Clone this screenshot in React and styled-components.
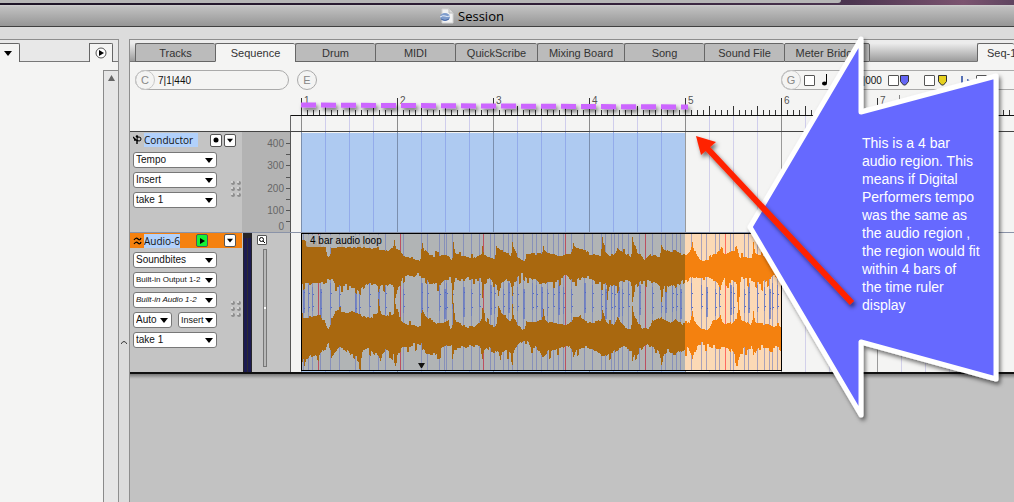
import React, { useId } from "react";
import styled, { createGlobalStyle, css } from "styled-components";

const sans = `"Liberation Sans", Arial, Helvetica, sans-serif`;
const humanist = `"Open Sans", "Noto Sans", sans-serif`;

const GlobalStyle = createGlobalStyle`
  *, *::before, *::after { box-sizing: border-box; }
  body { margin: 0; background: #dcdcdc; font-family: ${sans}; font-size: 11px; color: #222; }
  button, select, input { font-family: inherit; margin: 0; padding: 0; }
  svg { display: block; }
`;

/* ---------- window frame ---------- */

const Screen = styled.div`
  position: relative;
  display: flex;
  flex-direction: column;
  min-height: 100vh;
  overflow: hidden;
`;

const Desktop = styled.div`
  height: 5px;
  background: linear-gradient(90deg, #1d1426 0%, #33203a 60%, #4c3550 84%, #7c5470 95%, #5f4560 100%);
`;

const BackWindow = styled.div`
  height: 3px;
  margin-right: 173px;
  background: #b6b6b6;
  border-bottom-right-radius: 3px;
`;

const TitleBar = styled.header`
  display: flex;
  align-items: center;
  justify-content: center;
  gap: 4px;
  height: 22px;
  padding-right: 70px;
  background: linear-gradient(#d0d0d0, #c0c0c0 10%, #969696);
  border-bottom: 1px solid #404040;
`;

const Title = styled.h1`
  margin: 0;
  font: 400 13px/20px ${humanist};
  color: #000;
`;

const Workspace = styled.main`
  display: flex;
  flex: 1;
  gap: 10px;
  padding-top: 12px;
`;

/* ---------- left list panel ---------- */

const SidePanel = styled.aside`
  display: flex;
  flex-direction: column;
  flex: none;
  width: 119px;
  border: solid #8e8e8e;
  border-width: 1px 1px 0 0;
  background: #f4f4f3;
`;

const SideTabs = styled.div`
  display: flex;
  align-items: flex-end;
  height: 22px;
  background: #e8e8e8;
`;

const SideTab = styled.button`
  display: flex;
  align-items: center;
  justify-content: center;
  height: 19px;
  width: ${(p) => p.$width}px;
  border: solid #666;
  border-width: 1px 1px 0 ${(p) => (p.$flush ? 0 : 1)}px;
  border-radius: 0 2px 0 0;
  background: #f4f4f3;
  ${(p) => p.$flush && css`padding-right: 4px;`}
`;

const TabLine = styled.div`
  flex: ${(p) => (p.$grow ? 1 : "none")};
  width: 5px;
  border-bottom: 1px solid #777;
`;

const SideBody = styled.div`
  display: flex;
  flex: 1;
  justify-content: flex-end;
  padding-top: 8px;
`;

const ScrollTrack = styled.div`
  width: 15px;
  padding: 4px 0 0 4px;
  border: solid #8a8a8a;
  border-width: 1px 0 0 1px;
  background: #e6e6e6;
`;

const Divider = styled.div`
  position: absolute;
  left: 121px;
  top: 340px;
`;

/* ---------- sequence panel ---------- */

const MainPanel = styled.section`
  display: flex;
  flex-direction: column;
  flex: 1;
  min-width: 0;
  border: solid #8e8e8e;
  border-width: 1px 0 0 1px;
  background: #c2c2c2;
`;

const TabStrip = styled.nav`
  display: flex;
  height: 22px;
  padding-top: 3px;
  overflow: hidden;
  background: #ececec;
`;

const StripFill = styled.div`
  flex: ${(p) => (p.$lead ? "none" : 1)};
  width: 5px;
  border-bottom: 1px solid #777;
  background: linear-gradient(#ededed, #9c9c9c);
`;

const Tab = styled.button`
  flex: none;
  width: ${(p) => p.$width}px;
  height: 19px;
  border: 1px solid #666;
  border-right-width: 0;
  border-radius: 2px 2px 0 0;
  background: #bbb;
  color: #333;
  font-size: 11px;
  line-height: 18px;
  white-space: nowrap;
  ${(p) => p.$active && css`background: #f4f4f3; border-bottom-color: #f4f4f3;`}
  ${(p) => p.$last && css`border-right-width: 1px;`}
  ${(p) => p.$cut && css`text-align: left; padding-left: 9px;`}
`;

const Toolbar = styled.div`
  display: flex;
  gap: 8px;
  height: 33px;
  padding: 8px 0 5px 5px;
  background: #f4f4f3;
`;

const Pill = styled.div`
  display: flex;
  align-items: center;
  height: 20px;
  width: ${(p) => p.$width}px;
  border: 1px solid #aaa;
  border-radius: 10px;
  color: #111;
  font-size: 10px;
  ${(p) => p.$open && css`
    margin-left: auto;
    border-right-width: 0;
    border-radius: 10px 0 0 10px;
  `}
`;

const Knob = styled.button`
  flex: none;
  width: 20px;
  height: 20px;
  border: 1px solid ${(p) => (p.$alone ? "#aaa" : "#c8c8c8")};
  border-radius: 50%;
  margin: ${(p) => (p.$alone ? 0 : "0 3px 0 -1px")};
  background: none;
  color: #888;
  font-size: 11px;
`;

const Counter = styled.input`
  width: 100px;
  border: 0;
  background: none;
  color: #111;
  font-size: 10px;
`;

const Tick = styled.input`
  appearance: none;
  flex: none;
  width: 11px;
  height: 11px;
  border: 1px solid #555;
  border-radius: 1px;
  background: #fff;
`;

const GridReadout = styled.span`
  display: flex;
  align-items: center;
  gap: 29px;
  margin-left: 7px;
  width: 66px;
`;

const Marker = styled.span`
  width: ${(p) => p.$width}px;
  padding-left: ${(p) => p.$lead || 0}px;
`;

const RulerRow = styled.div`
  display: flex;
  height: 36px;
  background: #f4f4f3;
`;

const RulerLabel = styled.div`
  flex: none;
  width: 160px;
`;

const Track = styled.section`
  display: grid;
  grid-template-columns: 112px 49px 1fr;
  height: ${(p) => p.$height}px;
  border-top: 1px solid ${(p) => p.$line};
  background: #c4c4c4;
`;

const TrackInfo = styled.div`
  display: flex;
  flex-direction: column;
  min-width: 0;
`;

const TrackHeader = styled.div`
  display: flex;
  align-items: center;
  gap: 2px;
  height: ${(p) => (p.$armed ? 15 : 16)}px;
  padding: 0 6px 0 3px;
  background: ${(p) => (p.$armed ? "#f5810f" : "none")};
`;

const TrackName = styled.span`
  height: 14px;
  padding-right: ${(p) => (p.$tight ? 0 : 5)}px;
  background: #b2d1fb;
  color: #111;
  font: 400 10px/14px ${humanist};
`;

const SmallButton = styled.button`
  display: flex;
  align-items: center;
  justify-content: center;
  width: 12px;
  height: 13px;
  border: 1px solid #555;
  border-radius: 2px;
  background: ${(p) => (p.$on ? "#12f236" : "#fff")};
  ${(p) => p.$first && css`margin-left: auto;`}
  ${(p) => p.$apart && css`margin-left: 14px;`}
`;

const InfoBody = styled.div`
  display: flex;
  align-items: center;
  justify-content: space-between;
  height: ${(p) => (p.$tall ? 104 : 64)}px;
  padding: 0 1px 0 3px;
  > svg { margin-top: 18px; }
`;

const Fields = styled.div`
  display: flex;
  flex-direction: column;
  gap: 4px;
  width: 84px;
`;

const FieldPair = styled.div`
  display: flex;
  justify-content: space-between;
`;

const PickerBox = styled.label`
  display: grid;
  width: ${(p) => (p.$half ? "39px" : "100%")};
  height: 16px;
  > * { grid-area: 1 / 1; }
  > svg { justify-self: end; align-self: center; margin-right: 4px; pointer-events: none; }
`;

const PickerSelect = styled.select`
  appearance: none;
  width: 100%;
  height: 16px;
  padding-left: 2px;
  border: 1px solid #777;
  border-radius: 3px;
  background: #fff;
  color: #111;
  font-size: ${(p) => p.$size}px;
  line-height: 14px;
  ${(p) => p.$slanted && css`font-style: italic;`}
`;

const Scale = styled.div`
  border-right: 1px solid #555;
  background: #b3b3b3;
`;

const AudioStrip = styled.div`
  display: flex;
  border-right: 1px solid #555;
`;

const Meter = styled.div`
  width: 9px;
  margin-left: 1px;
  border: solid #26262a;
  border-width: 5px 1px 0;
  background: linear-gradient(90deg, #1c1b52 0 3px, #2c2c30 3px 4px, #1c1b52 4px);
`;

const ZoomColumn = styled.div`
  display: flex;
  flex-direction: column;
  align-items: center;
  gap: 3px;
  flex: 1;
  padding: 2px 18px 5px 0;
`;

const ZoomButton = styled.button`
  display: flex;
  align-items: center;
  justify-content: center;
  width: 10px;
  height: 10px;
  border: 1px solid #555;
  border-radius: 1px;
  background: #fff;
`;

const Slider = styled.input`
  appearance: none;
  writing-mode: vertical-lr;
  flex: 1;
  width: 4px;
  min-height: 0;
  margin: 1px 0 0 6px;
  border: 1px solid #777;
  background: #b8b8b8;
  &::-webkit-slider-thumb { appearance: none; width: 2px; height: 2px; background: #fff; }
`;

const Lane = styled.div`
  min-width: 0;
  overflow: hidden;
  background: #f4f4f3;
`;

const PanelShadow = styled.div`
  height: 7px;
  border-top: 2px solid #111;
  background: linear-gradient(#777, #b0b0b0 70%, #c2c2c2);
`;

/* ---------- callout laid over the window ---------- */

const Callout = styled.svg`
  position: absolute;
  left: 0;
  top: 0;
  pointer-events: none;
`;

const CalloutText = styled.p`
  position: absolute;
  left: 862px;
  top: 134px;
  width: 130px;
  margin: 0;
  color: #fff;
  font-size: 14px;
  line-height: 18px;
  white-space: pre-line;
`;

/* ---------- timeline data ---------- */

const BAR = 96;
const START = 10;
const BARS = 24;
const NUMBERED_BARS = 7;
const SELECTED = 4 * BAR;

/* Envelopes are [x, y] pairs; x runs from the left edge of the region. */
const topHigh = [[0,6],[4,8],[9,10],[24,14],[27,24],[30,15],[50,14],[70,15],[84,18],[90,16],[93,7],[96,16],[99,19],[102,23],[109,24],[118,28],[120,16],[121,10],[124,18],[134,23],[147,22],[150,27],[152,8],[155,22],[164,23],[169,26],[179,22],[181,12],[184,23],[192,26],[195,14],[202,18],[209,22],[211,10],[213,16],[222,28],[225,21],[239,21],[242,12],[245,20],[257,23],[267,21],[272,9],[275,15],[284,16],[289,21],[299,22],[301,8],[303,17],[309,22],[316,15],[321,19],[329,23],[331,4],[334,14],[339,22],[343,26],[349,22],[357,24],[360,11],[364,17],[369,19],[374,17],[384,22],[391,10],[394,19],[402,28],[411,22],[419,15],[424,20],[436,17],[439,24],[449,26],[452,9],[455,21],[463,24],[480,28]];
const topLow = [[0,54],[4,51],[24,49],[27,47],[30,45],[34,52],[44,53],[59,61],[61,56],[66,52],[74,50],[77,59],[81,52],[84,54],[90,50],[93,68],[99,52],[102,44],[109,43],[119,41],[120,43],[127,50],[139,51],[145,46],[149,45],[151,69],[154,46],[164,47],[169,45],[179,46],[181,64],[185,45],[192,50],[197,61],[201,51],[207,46],[211,61],[214,47],[222,42],[229,46],[239,50],[249,49],[257,49],[264,44],[271,50],[284,45],[294,50],[304,51],[306,68],[309,51],[316,53],[321,47],[329,49],[331,67],[334,52],[343,46],[354,50],[360,64],[364,51],[374,54],[384,49],[399,44],[409,46],[419,58],[424,46],[434,50],[437,88],[440,44],[449,47],[461,50],[474,44],[480,46]];
const lowHigh = [[0,83],[4,85],[19,82],[23,88],[27,95],[30,85],[34,78],[44,79],[54,79],[59,82],[74,86],[77,66],[81,82],[91,83],[93,66],[99,85],[102,90],[119,94],[120,81],[121,78],[129,86],[139,91],[147,88],[150,96],[152,70],[155,88],[169,94],[179,88],[181,76],[185,88],[193,93],[197,74],[204,82],[209,89],[211,72],[213,86],[222,96],[225,89],[239,88],[242,76],[245,89],[264,91],[272,84],[279,83],[291,90],[299,87],[301,77],[309,92],[316,84],[329,96],[331,74],[335,86],[344,96],[351,88],[360,84],[369,90],[374,86],[384,91],[391,78],[394,89],[402,97],[411,88],[419,82],[424,91],[434,86],[437,69],[441,88],[449,91],[452,79],[455,90],[480,94]];
const lowLow = [[0,124],[3,133],[9,122],[17,127],[24,116],[28,111],[30,126],[39,116],[49,123],[59,133],[62,116],[74,121],[79,129],[84,118],[91,121],[93,131],[99,119],[102,114],[119,110],[121,118],[132,121],[139,118],[149,111],[151,126],[154,116],[174,112],[181,124],[185,115],[193,118],[199,127],[204,118],[211,125],[215,114],[223,109],[229,114],[241,125],[254,116],[264,112],[272,123],[279,114],[299,120],[306,124],[314,118],[321,114],[329,116],[331,128],[339,116],[344,112],[354,118],[360,131],[367,118],[374,122],[384,116],[391,127],[399,111],[414,114],[424,116],[436,132],[441,116],[449,114],[452,124],[459,112],[480,116]];

const beatMarks = [2,7,11,19,29,38,54,58,68,77,84,102,120,126,138,143,145,151,162,170,178,189,193,202,207,211,216,222,231,235,240,246,252,257,262,270,283,291,300,304,310,313,317,321,327,338,351,360,364,371,375,379,390,400,405,414,418,429,432,443,447,456,463,468,471,476];
const redMarks = [17, 99, 182, 264, 344, 424];

const jitter = (i, seed) => {
  const v = Math.sin(i * 12.9898 + seed * 78.233) * 43758.5453;
  return v - Math.floor(v);
};

/* Peaks stay narrow: the curve hugs the quieter end of each segment. */
function sample(points, x, outward) {
  const i = points.findIndex((p) => p[0] >= x);
  if (i <= 0) return points[0][1];
  const [x0, y0] = points[i - 1];
  const [x1, y1] = points[i];
  const t = (x - x0) / (x1 - x0);
  const rise = (y1 - y0) * outward;
  if (Math.abs(rise) < 5) return y0 + (y1 - y0) * t;
  return rise > 0 ? y0 + (y1 - y0) * t ** 3 : y1 + (y0 - y1) * (1 - t) ** 2;
}

function wavePath(high, low, seed) {
  let d = "";
  for (let x = 0; x < 480; x += 1) {
    const step = Math.floor(x / 2);
    const spikeUp = jitter(step, seed + 4) > 0.93 ? 4 : 0;
    const spikeDown = jitter(step, seed + 7) > 0.88 ? 6 : 0;
    const a = Math.round(sample(high, x, -1) - jitter(step, seed) * 2 - spikeUp + 1);
    const b = Math.round(sample(low, x, 1) + jitter(step, seed + 1) * 4 + spikeDown - 2);
    d += `M${x} ${a}h1V${b}h-1z`;
  }
  return d;
}

const waves = [wavePath(topHigh, topLow, 1), wavePath(lowHigh, lowLow, 2)];

/* ---------- drawings ---------- */

const Down = ({ w = 8 }) => (
  <svg width={w} height="5" viewBox="0 0 8 5"><path d="M0 0h8L4 5z" fill="#000" /></svg>
);

const Grip = () => (
  <svg width="10" height="16">
    {[0, 6].flatMap((x) => [0, 6, 12].map((y) => (
      <g key={`${x}-${y}`}>
        <circle cx={x + 2} cy={y + 2} r="2" fill="#8e8e8e" />
        <circle cx={x + 1} cy={y + 1} r="1" fill="#e4e4e4" />
      </g>
    )))}
  </svg>
);

const Shield = ({ color }) => (
  <svg width="9" height="11"><path d="M.5.5h8v6l-3 3.500h-2l-3-3.500z" fill={color} stroke="#333" /></svg>
);

const DocIcon = () => (
  <svg width="14" height="16">
    <path d="M2 1h7l4 4v10H2z" fill="#f3f3f3" stroke="#d2d2d2" />
    <path d="M9 1v4h4" fill="#ddd" stroke="#bbb" />
    <ellipse cx="5" cy="9" rx="5" ry="4" fill="#7e9ccc" />
    <path d="M0 9q3-2 5-1t5 0" fill="none" stroke="#e8effa" />
    <path d="M1 11q4 3 8 0" fill="none" stroke="#4b6aa8" />
  </svg>
);

const ConductorIcon = () => (
  <svg width="9" height="10" fill="none" stroke="#000">
    <path d="M0 2l3 3 2 1M1 5h2M4 9V5" strokeWidth="1.400" />
    <circle cx="6" cy="4" r="2" />
    <circle cx="4" cy="1.500" r="1.300" fill="#000" stroke="none" />
  </svg>
);

const WaveIcon = () => (
  <svg width="9" height="10" fill="none" stroke="#000" strokeWidth="1.200">
    <path d="M1 4q2-3 4-1t3-1M1 8q2-3 4-1t3-1" />
  </svg>
);

function Ruler() {
  const ticks = [];
  for (let i = 0; i < BARS * 16; i += 1) {
    const h = i % 16 === 0 ? 17 : i % 4 === 0 ? 9 : 5;
    ticks.push(<rect key={i} x={START + 1 + i * 6} y={20 - h} width="1" height={h} fill="#333" />);
  }
  return (
    <svg width="100%" height="36">
      {ticks}
      {Array.from({ length: NUMBERED_BARS }, (_, b) => (
        <text key={b} x={START + 4 + b * BAR} y="9" fontSize="10" fill="#555">{b + 1}</text>
      ))}
      <rect x="609" width="1" height="5" fill="#888" />
      <rect y="20" width="100%" height="1" fill="#111" />
      <rect y="20" width="1" height="16" fill="#666" />
      {Array.from({ length: BARS * 4 }, (_, i) => (
        <rect key={i} x={START + 1 + i * 24} y="21" width="1" height="15" fill={i % 4 ? "#cfcdec" : "#8c8c8c"} />
      ))}
    </svg>
  );
}

function Grid({ height }) {
  return Array.from({ length: BARS * 4 }, (_, i) => {
    const selected = i < 16;
    const fill = i % 4 ? (selected ? "#93abea" : "#d2d0ea") : selected ? "#7b8fae" : "#9a9a9a";
    return <rect key={i} x={START + i * 24} width="1" height={height} fill={fill} />;
  });
}

function TempoLane() {
  return (
    <svg width="100%" height="100">
      <rect x={START} y="1" width={SELECTED} height="99" fill="#aecaf1" />
      <Grid height={100} />
    </svg>
  );
}

function AudioLane() {
  const id = useId();
  return (
    <svg width="100%" height="139">
      <rect x={START} width={SELECTED} height="139" fill="#aecaf1" />
      <Grid height={139} />
      <svg x={START} y="0" width="481" height="138">
        <rect width="480" height="138" fill="#fcd9b5" />
        <rect width={SELECTED} height="138" fill="#b1b4b5" />
        {beatMarks.map((x, i) => (
          <g key={x}>
            <rect x={x} width="1" height="138" fill="#6473bb" opacity="0.550" />
            <rect x={x} y={50 + (i % 4) * 2} width={i % 3 ? 1 : 2} height={30 - (i % 3) * 3} fill="#6678c4" opacity="0.750" />
            <rect x={x + 1} y={59 + (i % 3)} width="1" height="1" fill="#5068c8" />
            <rect x={x + 1} y={75 - (i % 3)} width="1" height="1" fill="#5068c8" />
          </g>
        ))}
        {redMarks.map((x) => <rect key={x} x={x} width="1" height="138" fill={x > SELECTED ? "#ff6a60" : "#bc5060"} />)}
        <defs>
          <linearGradient id={id} gradientUnits="userSpaceOnUse" x1="0" x2="480" y1="0" y2="0">
            <stop offset="0.800" stopColor="#a9680f" />
            <stop offset="0.800" stopColor="#f4810f" />
          </linearGradient>
        </defs>
        {waves.map((d, i) => <path key={i} d={d} fill={`url(#${id})`} />)}
        <rect x="5" y="2" width="78" height="12" rx="2" fill="#b1b4b5" opacity="0.850" />
        <text x="9" y="11" fontSize="10" fill="#000">4 bar audio loop</text>
        <path d="M117 130h7l-3 5h-1z" fill="#111" />
        <rect x="0.500" y="0.500" width="480" height="137" fill="none" stroke="#000" />
      </svg>
    </svg>
  );
}

function TempoScale() {
  const labels = [[400, 15], [300, 37], [200, 60], [100, 82], [0, 98]];
  return (
    <svg width="48" height="100">
      {labels.map(([v, y]) => <text key={v} x="42" y={y} textAnchor="end" fontSize="10" fill="#666">{v}</text>)}
      {[11, 22, 33, 45, 56, 67, 78, 89].map((y) => <rect key={y} x="44" y={y} width="4" height="1" fill="#555" />)}
    </svg>
  );
}

function Picker({ label, value, half, size = 10, slanted }) {
  return (
    <PickerBox $half={half}>
      <PickerSelect aria-label={label} defaultValue={value} $size={size} $slanted={slanted}>
        <option>{value}</option>
      </PickerSelect>
      <Down />
    </PickerBox>
  );
}

const tabs = [["Tracks", 80], ["Sequence", 80], ["Drum", 80], ["MIDI", 80], ["QuickScribe", 82], ["Mixing Board", 87], ["Song", 80], ["Sound File", 80], ["Meter Bridge", 86]];

const calloutLines = `This is a 4 bar
audio region. This
means if Digital
Performers tempo
was the same as
the audio region ,
the region would fit
within 4 bars of
the time ruler
display`;

export default function App() {
  return (
    <Screen>
      <GlobalStyle />
      <Desktop><BackWindow /></Desktop>
      <TitleBar><DocIcon /><Title>Session</Title></TitleBar>
      <Workspace>
        <SidePanel>
          <SideTabs>
            <SideTab $width={20} $flush aria-label="View menu"><Down /></SideTab>
            <TabLine $grow />
            <SideTab $width={24} aria-label="Options">
              <svg width="12" height="12"><circle cx="6" cy="6" r="5" fill="#fff" stroke="#555" /><path d="M4 3v6l5-3z" /></svg>
            </SideTab>
            <TabLine />
          </SideTabs>
          <SideBody>
            <ScrollTrack><svg width="7" height="6"><path d="M3.500 0L7 6H0z" fill="#666" /></svg></ScrollTrack>
          </SideBody>
        </SidePanel>

        <MainPanel>
          <TabStrip>
            <StripFill $lead />
            {tabs.map(([name, width], i) => (
              <Tab key={name} $width={width} $active={i === 1} $last={i === tabs.length - 1}>{name}</Tab>
            ))}
            <StripFill />
            <Tab $width={37} $active $cut>Seq-1</Tab>
          </TabStrip>

          <Toolbar>
            <Pill $width={154}>
              <Knob>C</Knob>
              <Counter aria-label="Cursor position" defaultValue="7|1|440" />
            </Pill>
            <Knob $alone>E</Knob>
            <Pill $width={233} $open>
              <Knob>G</Knob>
              <Tick type="checkbox" aria-label="Snap to grid" />
              <GridReadout>
                <svg width="6" height="12"><ellipse cx="2.500" cy="9.500" rx="2.500" ry="2" /><path d="M4 0h1v9H4z" /></svg>
                <span>0|000</span>
              </GridReadout>
              <Tick type="checkbox" aria-label="Snap to markers" />
              <Marker $width={25} $lead={1}><Shield color="#6466f5" /></Marker>
              <Tick type="checkbox" aria-label="Snap to user markers" />
              <Marker $width={26} $lead={3}><Shield color="#e6d01f" /></Marker>
              <Marker $width={15}>
                <svg width="10" height="9"><path d="M0 0h2v9H0z" fill="#5570b5" /><path d="M6 3h1l2 2-2 2H6z" fill="#5570b5" /></svg>
              </Marker>
              <Tick type="checkbox" aria-label="Snap to beats" />
            </Pill>
          </Toolbar>

          <RulerRow><RulerLabel /><Ruler /></RulerRow>

          <Track $height={101} $line="#444">
            <TrackInfo>
              <TrackHeader>
                <ConductorIcon />
                <TrackName>Conductor</TrackName>
                <SmallButton $first aria-label="Record"><svg width="6" height="6"><circle cx="3" cy="3" r="2.500" /></svg></SmallButton>
                <SmallButton aria-label="Conductor menu"><Down w={6} /></SmallButton>
              </TrackHeader>
              <InfoBody>
                <Fields>
                  <Picker label="Conductor data" value="Tempo" />
                  <Picker label="Conductor mode" value="Insert" />
                  <Picker label="Conductor take" value="take 1" />
                </Fields>
                <Grip />
              </InfoBody>
            </TrackInfo>
            <Scale><TempoScale /></Scale>
            <Lane><TempoLane /></Lane>
          </Track>

          <Track $height={140} $line="#8a93a8">
            <TrackInfo>
              <TrackHeader $armed>
                <WaveIcon />
                <TrackName $tight>Audio-6</TrackName>
                <SmallButton $first $on aria-label="Play enable"><svg width="5" height="6"><path d="M0 0l5 3-5 3z" /></svg></SmallButton>
                <SmallButton $apart aria-label="Audio menu"><Down w={6} /></SmallButton>
              </TrackHeader>
              <InfoBody $tall>
                <Fields>
                  <Picker label="Audio data" value="Soundbites" />
                  <Picker label="Audio output" value="Built-in Output 1-2" size={8} />
                  <Picker label="Audio input" value="Built-in Audio 1-2" size={8} slanted />
                  <FieldPair>
                    <Picker label="Automation" value="Auto" half />
                    <Picker label="Audio mode" value="Insert" half size={9} />
                  </FieldPair>
                  <Picker label="Audio take" value="take 1" />
                </Fields>
                <Grip />
              </InfoBody>
            </TrackInfo>
            <AudioStrip>
              <Meter />
              <ZoomColumn>
                <ZoomButton aria-label="Zoom waveform">
                  <svg width="8" height="8" fill="none" stroke="#000"><circle cx="3.500" cy="3.500" r="2" /><path d="M5 5l2 2" /></svg>
                </ZoomButton>
                <Slider type="range" aria-label="Vertical zoom" />
              </ZoomColumn>
            </AudioStrip>
            <Lane><AudioLane /></Lane>
          </Track>
          <PanelShadow />
        </MainPanel>
      </Workspace>

      <Divider><svg width="6" height="5"><path d="M0 4q3-5 6 0" fill="none" stroke="#333" /></svg></Divider>

      <Callout width="1014" height="502">
        <defs>
          <filter id="drop" x="0" y="0" width="1014" height="502" filterUnits="userSpaceOnUse">
            <feDropShadow dx="2" dy="3" stdDeviation="2" floodOpacity="0.550" />
          </filter>
        </defs>
        <g filter="url(#drop)">
          <path d="M301 105L688 107" stroke="#cc66ff" strokeWidth="5" strokeDasharray="15 5" />
        </g>
        <path d="M750 227L861 39V112L996 76V379L861 342V415Z" fill="#6669ff" stroke="#fff" strokeWidth="5" strokeLinejoin="round" filter="url(#drop)" />
        <g fill="#ff2200" filter="url(#drop)">
          <path d="M852 303L706 147" stroke="#ff2200" strokeWidth="6" />
          <path d="M696 136L716 142L701 155Z" />
        </g>
      </Callout>
      <CalloutText>{calloutLines}</CalloutText>
    </Screen>
  );
}
